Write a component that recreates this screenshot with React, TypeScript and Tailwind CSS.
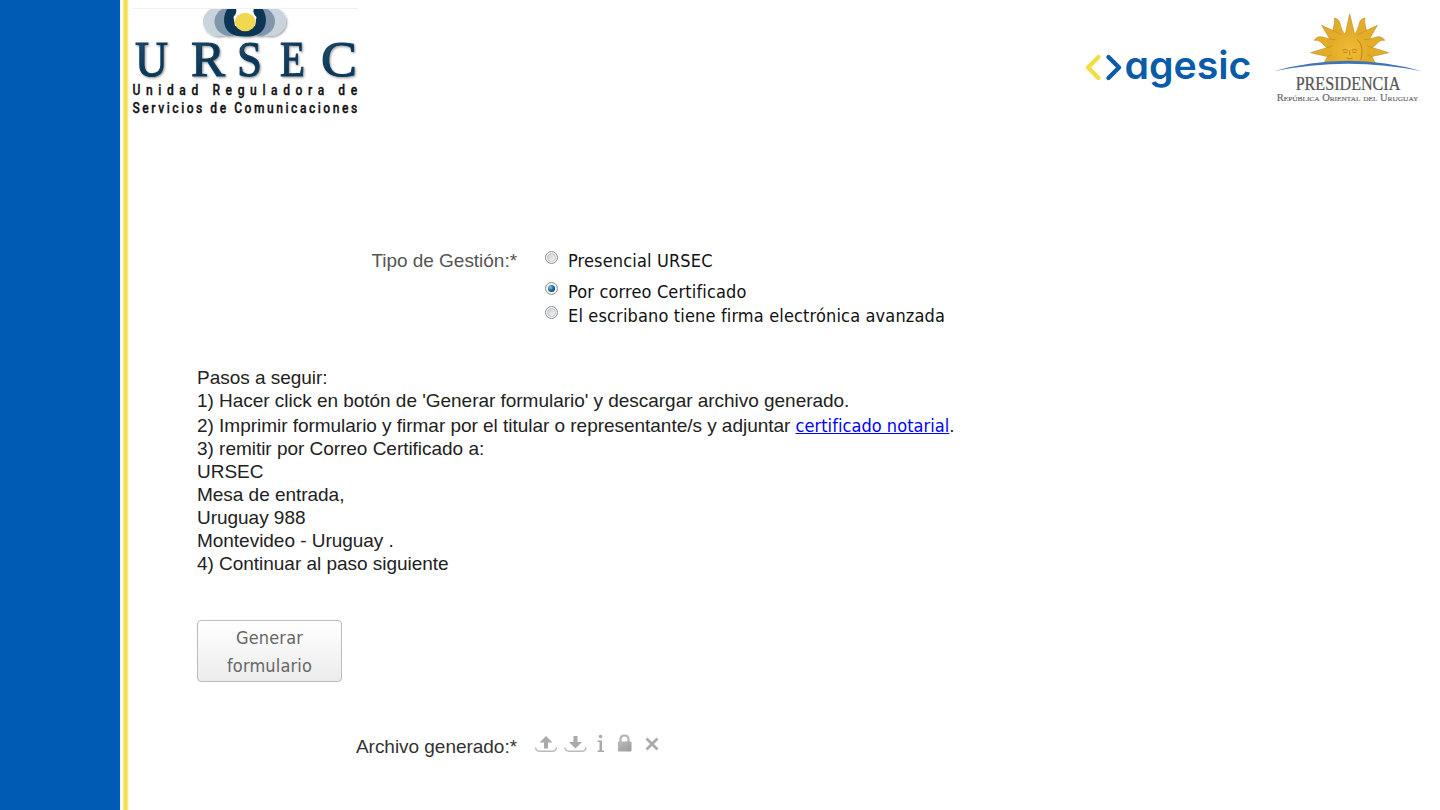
const arial = "font-['Liberation_Sans',Arial,sans-serif]";
const tahoma = "font-['DejaVu_Sans_Condensed','DejaVu_Sans',sans-serif] [font-stretch:condensed]";

function UrsecLogo() {
  return (
    <svg width="230" height="112" viewBox="0 0 230 112" className="block shrink-0" role="img">
      <defs>
        <linearGradient id="navy" x1="0" y1="0" x2="1" y2="1">
          <stop offset="0" stopColor="#315a78" />
          <stop offset="0.5" stopColor="#0b3556" />
          <stop offset="1" stopColor="#123f60" />
        </linearGradient>
        <filter id="soft" x="-10%" y="-20%" width="120%" height="150%">
          <feDropShadow dx="1" dy="1.2" stdDeviation="0.8" floodColor="#000" floodOpacity="0.4" />
        </filter>
        <clipPath id="emblem"><rect x="60" y="1" width="110" height="34" /></clipPath>
      </defs>
      <path d="M0 .5H226" stroke="#f1f1f1" />
      <g clipPath="url(#emblem)">
        <g filter="url(#soft)">
          <ellipse cx="87" cy="13.500" rx="16" ry="14.500" fill="#c9d4dc" />
          <ellipse cx="138" cy="13.500" rx="16" ry="14.500" fill="#c9d4dc" />
          <ellipse cx="98" cy="13.500" rx="15.500" ry="14.500" fill="#8097ab" />
          <ellipse cx="127.500" cy="13.500" rx="15.500" ry="14.500" fill="#8097ab" />
          <path d="M96 0C90 8 91 20 98 25Q103 28.500 113 28.500Q123 28.500 128 25C135 20 136 8 130 0Z" fill="#0c3454" />
        </g>
        <path d="M103.500 0H122.500Q119.500 4 124.500 9L123 18H103L101.500 9Q106 4 103.500 0Z" fill="#fff" />
        <ellipse cx="113.200" cy="14" rx="10.300" ry="9.300" fill="#f1d850" />
      </g>
      <g filter="url(#soft)" fill="url(#navy)" stroke="#113b5a" strokeWidth="1.100" fontFamily="Liberation Serif, serif" fontSize="51">
        <text x="3" y="67.500" textLength="33" lengthAdjust="spacingAndGlyphs">U</text>
        <text x="59" y="67.500" textLength="34" lengthAdjust="spacingAndGlyphs">R</text>
        <text x="105" y="67.500" textLength="25" lengthAdjust="spacingAndGlyphs">S</text>
        <text x="148" y="67.500" textLength="25" lengthAdjust="spacingAndGlyphs">E</text>
        <text x="189" y="67.500" textLength="36" lengthAdjust="spacingAndGlyphs">C</text>
      </g>
      <g fill="#111" stroke="#111" strokeWidth=".35" fontFamily="Roboto, sans-serif" fontWeight="500" fontSize="15.500">
        <text transform="translate(0.500 87) scale(.78 1)" textLength="288">Unidad Reguladora de</text>
        <text transform="translate(0.500 104.500) scale(.78 1)" textLength="288">Servicios de Comunicaciones</text>
      </g>
    </svg>
  );
}

function AgesicLogo() {
  return (
    <svg width="170" height="60" viewBox="0 0 170 60" className="block shrink-0 overflow-visible" role="img">
      <g fill="none" strokeWidth="4.400" strokeLinecap="round" strokeLinejoin="round">
        <path d="M14.500 13L4 23.500L14.500 34" stroke="#f5dc45" />
        <path d="M24.500 13L35 23.500L24.500 34" stroke="#0a5ca8" />
      </g>
      <text x="40.500" y="35" textLength="127" lengthAdjust="spacingAndGlyphs" fill="#0a5ca8"
        className="[font-feature-settings:'cv11']" fontFamily="Inter, sans-serif" fontWeight="600" fontSize="39">agesic</text>
    </svg>
  );
}

function PresidenciaLogo() {
  return (
    <svg width="150" height="96" viewBox="606 36 450 288" className="block shrink-0" role="img">
      <defs>
        <clipPath id="horizon"><path d="M600 0H1060V214Q835 156 600 214Z" /></clipPath>
        <radialGradient id="gold"><stop offset="0" stopColor="#f1bd36" /><stop offset="1" stopColor="#e4ad28" /></radialGradient>
      </defs>
      <g clipPath="url(#horizon)" fill="#e4ad28" stroke="#c38d24" strokeWidth="2" strokeLinejoin="round">
        <path d="M839 42L856 112L824 112Z" />
        <path d="M793 54C819 60 802 80 829 108L799 121C777 91 799 78 793 54Z" />
        <path d="M885 54C859 60 876 80 849 108L879 121C901 91 879 78 885 54Z" />
        <path d="M755 76L822 107L790 135Z" />
        <path d="M922 76L856 107L888 135Z" />
        <path d="M733 121C750 96 771 124 804 118L788 148C758 146 757 116 733 121Z" />
        <path d="M944 121C928 96 907 124 874 118L890 148C920 146 921 116 944 121Z" />
        <path d="M722 158L797 135L792 174Z" />
        <path d="M956 158L881 135L886 174Z" />
        <path d="M758 190C772 184 762 166 794 162V194H758Z" />
        <path d="M920 190C906 184 916 166 884 162V194H920Z" />
        <circle cx="839" cy="153" r="55" fill="url(#gold)" stroke="none" />
        <path d="M817 151Q826 145 834 151M845 151Q853 145 862 151M820 157H832M847 157H859M839 151V166M830 174Q839 179 848 174" fill="none" stroke="#b87f1d" strokeWidth="3" />
        <path d="M862 118Q884 140 872 180" fill="none" stroke="#b87f1d" strokeWidth="2.500" />
      </g>
      <path d="M611 214Q835 151 1056 214Q835 169 611 214Z" fill="#3f74b8" />
      <text x="677" y="269" textLength="314" lengthAdjust="spacingAndGlyphs" fill="#555" stroke="#555" strokeWidth=".7" fontFamily="Liberation Serif, serif" fontSize="56">PRESIDENCIA</text>
      <text x="620" y="303" textLength="425" lengthAdjust="spacingAndGlyphs" fill="#666" stroke="#666" strokeWidth=".5" fontFamily="Liberation Serif, serif" fontSize="30" className="[font-variant:small-caps]">República Oriental del Uruguay</text>
    </svg>
  );
}

function Radio({ checked = false }: { checked?: boolean }) {
  return (
    <span className="flex size-[13px] shrink-0 items-center justify-center rounded-full border border-[#8e8f8f] bg-[#f4f4f4]">
      <span className={checked
        ? "size-[7px] rounded-full bg-[radial-gradient(circle_at_35%_35%,#76cdf2,#186494_50%,#0b304c)]"
        : "size-[9px] rounded-full border border-[#c4c8cc] bg-linear-to-br from-[#c9ced2] to-[#f6f6f6]"} />
    </span>
  );
}

function FileTools() {
  return (
    <svg width="130" height="24" viewBox="0 0 130 24" className="block" fill="#aaa">
      <defs>
        <linearGradient id="lockBody" x1="0" y1="0" x2="1" y2="1">
          <stop offset="0" stopColor="#bbb" /><stop offset="1" stopColor="#999" />
        </linearGradient>
      </defs>
      <path d="M12 3L18.500 9.500H14V15.500H10V9.500H5.500Z" />
      <path d="M1.500 14.500Q2 18.200 5 18.200H19Q22 18.200 22.500 14.500" fill="none" stroke="#bbb" strokeWidth="1.500" />
      <path d="M39.500 3H43.500V9H48L41.500 15.500L35 9H39.500Z" />
      <path d="M31 14.500Q31.500 18.200 34.500 18.200H48.500Q51.500 18.200 52 14.500" fill="none" stroke="#bbb" strokeWidth="1.500" />
      <circle cx="66.500" cy="3.500" r="1.800" />
      <path d="M63.500 7.500H68V17.500H70V19H63.500V17.500H65.500V9H63.500Z" />
      <path d="M86.500 10V6.500Q86.500 2.500 90.500 2.500Q94.500 2.500 94.500 6.500V10" fill="none" stroke="#b5b5b5" strokeWidth="2.200" />
      <rect x="84" y="8.500" width="13.500" height="10" rx="1" fill="url(#lockBody)" />
      <path d="M112.500 5.500L123.500 16.500M123.500 5.500L112.500 16.500" stroke="#aaa" strokeWidth="2.800" />
    </svg>
  );
}

export default function App() {
  return (
    <div className={`flex h-[810px] w-full overflow-hidden bg-white text-[19px] leading-[23px] tracking-[-0.03px] text-[#222] ${arial}`}>
      <aside className="w-[120px] shrink-0 bg-[#005bb5]" />
      <div className="w-[9px] shrink-0 bg-[linear-gradient(to_right,#f5f5f5_0,#fff_2px,#fbf4bc_3px,#f5df51_4px,#f5df51_7px,#fbf1b0_8px,#fff_9px)]" />
      <main className="flex min-w-0 flex-1 flex-col">
        <header className="flex h-[120px] items-start pl-[3px] pt-2">
          <UrsecLogo />
          <div className="ml-auto flex pr-[18px] pt-1">
            <div className="pr-[18px] pt-[32px]"><AgesicLogo /></div>
            <PresidenciaLogo />
          </div>
        </header>
        <section className="mt-[129px] flex h-[119px]">
          <span className="w-[388px] text-right text-[#555]">Tipo de Gestión:*</span>
          <div className={`ml-[28px] text-[18px] tracking-[0.15px] text-[#111] ${tahoma}`}>
            <div className="flex h-[31px] gap-[10px] pt-px"><span className="pt-[1px]"><Radio /></span><span className="-mt-px">Presencial URSEC</span></div>
            <div className="flex h-[24px] gap-[10px]"><span className="pt-[2px]"><Radio checked /></span><span>Por correo Certificado</span></div>
            <div className="flex gap-[10px]"><span className="pt-[2px]"><Radio /></span><span>El escribano tiene firma electrónica avanzada</span></div>
          </div>
        </section>
        <section className="ml-[68px] mt-[-2px]">
          <p>Pasos a seguir:</p>
          <p>1) Hacer click en botón de 'Generar formulario' y descargar archivo generado.</p>
          <p className="pt-[2px]">2) Imprimir formulario y firmar por el titular o representante/s y adjuntar <a href="#" className={`text-[18px] tracking-[0.05px] text-[#00f] underline ${tahoma}`}>certificado notarial</a>.</p>
          <p>3) remitir por Correo Certificado a:</p>
          <p>URSEC</p>
          <p>Mesa de entrada,</p>
          <p>Uruguay 988</p>
          <p>Montevideo - Uruguay .</p>
          <p>4) Continuar al paso siguiente</p>
        </section>
        <button className={`ml-[68px] mt-[45px] h-[62px] w-[145px] shrink-0 rounded-[4px] border border-[#bbb] bg-linear-to-b from-white to-[#ececec] pt-[2px] text-[18px] leading-[28px] tracking-[0.15px] text-[#666] ${tahoma}`}>Generar<br />formulario</button>
        <section className="mt-[53px] flex">
          <span className="w-[388px] text-right text-[#333]">Archivo generado:*</span>
          <div className="ml-[17px] -mt-[2px]"><FileTools /></div>
        </section>
      </main>
    </div>
  );
}
